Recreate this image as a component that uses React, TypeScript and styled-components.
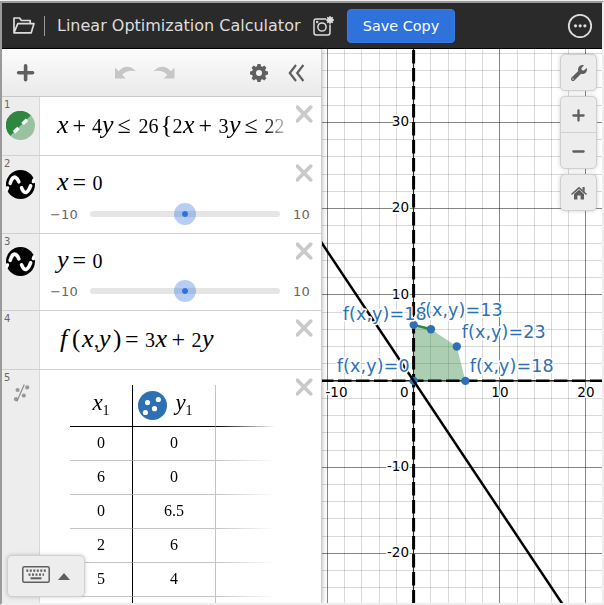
import React from "react";
import styled, { createGlobalStyle, css } from "styled-components";

const GlobalStyle = createGlobalStyle`
  * { box-sizing: border-box; }
  body { margin: 0; background: #eee; font-family: "DejaVu Sans", sans-serif; overflow: hidden; }
`;

const Frame = styled.div`
  width: 604px;
  height: 604px;
  margin-top: 1px;
  border: 2px solid;
  border-color: #9a9a9a #eee #eee #9a9a9a;
  display: flex;
  flex-direction: column;
  overflow: hidden;
  background: #fff;
`;

const Header = styled.header`
  height: 46px;
  flex: none;
  background: #2a2a2a;
  border-bottom: 1px solid #000;
  display: flex;
  align-items: center;
  padding: 0 10px 0 11px;
  color: #ddd;
`;

const Divider = styled.div`
  width: 1px;
  height: 20px;
  margin: 0 12px 0 9px;
  background: #999;
`;

const Title = styled.div`
  width: 256px;
  font-size: 16px;
  line-height: 20px;
  white-space: nowrap;
`;

const SaveButton = styled.button`
  width: 108px;
  height: 34px;
  margin: 0 auto 0 12px;
  border: 1px solid #3a7be0;
  border-radius: 4px;
  background: #2f72dc;
  color: #fff;
  padding: 0;
  font: 14.4px/32px "DejaVu Sans", sans-serif;
`;

const Main = styled.main`
  flex: 1;
  min-height: 0;
  display: flex;
`;

const Sidebar = styled.aside`
  width: 320px;
  flex: none;
  position: relative;
  z-index: 1;
  display: flex;
  flex-direction: column;
  background: #fff;
  border-right: 1px solid #ccc;
  box-shadow: 0 0 5px rgba(0, 0, 0, 0.32);
`;

const Toolbar = styled.div`
  height: 48px;
  flex: none;
  display: flex;
  align-items: center;
  padding: 0 16px 0 14px;
  background: linear-gradient(#fcfcfc, #eaeaea);
  border-bottom: 1px solid #c8c8c8;
`;

const ToolIcon = styled.svg<{ $gap?: number; $dim?: boolean }>`
  display: block;
  flex: none;
  margin-left: ${(p) => p.$gap ?? 0}px;
  color: ${(p) => (p.$dim ? "#c6c6c6" : "#5f5f5f")};
`;

const Expression = styled.section<{ $height: number }>`
  height: ${(p) => p.$height}px;
  flex: none;
  display: grid;
  grid-template-columns: 38px 1fr 25px;
  border-bottom: 1px solid #d0d0d0;
  overflow: hidden;
`;

const Gutter = styled.div`
  background: #ededed;
  border-right: 1px solid #d8d8d8;
  padding: 1px 0 0 2px;
`;

const Index = styled.div<{ $tight?: boolean }>`
  height: ${(p) => (p.$tight ? 12 : 13)}px;
  font-size: 10px;
  line-height: 13px;
  color: #666;
`;

const Badge = styled.svg`
  display: block;
  margin-left: 2px;
`;

const Body = styled.div`
  min-width: 0;
`;

const fade = css`
  mask-image: linear-gradient(90deg, #000 226px, transparent 250px);
`;

const MathLine = styled.div<{ $height: number; $line: number; $indent?: number; $fade?: boolean }>`
  display: flex;
  align-items: baseline;
  height: ${(p) => p.$height}px;
  line-height: ${(p) => p.$line}px;
  padding-left: ${(p) => p.$indent ?? 17}px;
  color: #000;
  font-family: "Liberation Serif", serif;
  font-size: 20px;
  overflow: hidden;
  ${(p) => p.$fade && fade}
`;

const Token = styled.span<{ $w: number; $kind: string }>`
  flex: none;
  width: ${(p) => p.$w}px;
  white-space: nowrap;
  ${(p) => p.$kind === "v" && css`font-style: italic; font-size: 26px;`}
  ${(p) => p.$kind === "o" && css`font-size: 24px;`}
  ${(p) => p.$kind === "b" && css`font-size: 25px;`}
`;

const SliderRow = styled.div`
  display: flex;
  align-items: center;
  height: 22px;
  color: #666;
  font-size: 13px;
  letter-spacing: 0.2px;
`;

const Bound = styled.span<{ $w: number; $pad: number }>`
  width: ${(p) => p.$w}px;
  flex: none;
  padding-left: ${(p) => p.$pad}px;
`;

const Track = styled.div`
  width: 190px;
  height: 6px;
  flex: none;
  border-radius: 3px;
  background: #e5e5e5;
  display: flex;
  align-items: center;
  justify-content: center;
`;

const Thumb = styled.div`
  width: 22px;
  height: 22px;
  flex: none;
  border-radius: 50%;
  border: 8px solid rgba(47, 114, 220, 0.35);
  background: #2f72dc;
  background-clip: padding-box;
`;

const CloseIcon = styled.svg`
  display: block;
  margin-top: 8px;
`;

const Table = styled.div`
  width: 205px;
  margin: 15px 0 0 30px;
  display: grid;
  grid-template-columns: 63px 83px 59px;
  grid-template-rows: 42px repeat(6, 34px);
  font-family: "Liberation Serif", serif;
  font-size: 16px;
  mask-image: linear-gradient(90deg, #000 147px, transparent 205px);
`;

const Cell = styled.div<{ $head?: boolean; $axis?: boolean; $last?: boolean }>`
  display: flex;
  align-items: center;
  justify-content: center;
  padding-bottom: ${(p) => (p.$head ? 0 : 2)}px;
  border-bottom: 1px solid ${(p) => (p.$head ? "#000" : "#c4c4c4")};
  border-right: ${(p) => (p.$last ? "none" : p.$axis ? "1px solid #000" : "1px solid #c4c4c4")};
`;

const HeadVar = styled.span`
  font-style: italic;
  font-size: 23px;
  line-height: 24px;
  margin-top: -6px;
  sub {
    font-style: normal;
    font-size: 14px;
    line-height: 0;
    vertical-align: -5px;
  }
`;

const DotBadge = styled.svg`
  flex: none;
  margin: 0 8px 0 -17px;
`;

const KeypadButton = styled.button`
  position: absolute;
  left: 5px;
  bottom: 6px;
  width: 78px;
  height: 42px;
  display: flex;
  align-items: center;
  gap: 8px;
  padding: 0 0 3px 14px;
  border: 1px solid #d0d0d0;
  border-radius: 5px;
  background: #ededed;
  box-shadow: 0 0 4px rgba(0, 0, 0, 0.2);
`;

const KeypadArrow = styled.svg`
  margin-top: 3px;
`;

const GraphPane = styled.div`
  flex: 1;
  min-width: 0;
  position: relative;
`;

const GraphSvg = styled.svg`
  display: block;
  font-family: "DejaVu Sans", sans-serif;
`;

const Controls = styled.div`
  position: absolute;
  top: 5px;
  right: 5px;
  display: flex;
  flex-direction: column;
  gap: 5px;
`;

const ControlGroup = styled.div`
  border: 1px solid #d0d0d0;
  border-radius: 5px;
  background: #ededed;
  box-shadow: 0 0 4px rgba(0, 0, 0, 0.18);
`;

const ControlButton = styled.button`
  width: 35px;
  height: 35px;
  display: flex;
  align-items: center;
  justify-content: center;
  padding: 1px 0 0;
  border: 0;
  background: none;
  & + & { border-top: 1px solid #d0d0d0; height: 36px; }
`;

type Tok = [string, number, ("v" | "n" | "o" | "b")?];

interface FormulaProps {
  tokens: Tok[];
  height: number;
  line?: number;
  indent?: number;
  faded?: boolean;
}

const Formula = ({ tokens, height, line, indent, faded }: FormulaProps) => (
  <MathLine $height={height} $line={line ?? height} $indent={indent} $fade={faded}>
    {tokens.map(([t, w, k], i) => (
      <Token key={i} $w={w} $kind={k ?? "n"}>{t}</Token>
    ))}
  </MathLine>
);

const Close = () => (
  <CloseIcon width="18" height="19" viewBox="0.8 0 18 19">
    <path d="M2.2 2.2 15.4 15.8M15.4 2.2 2.2 15.8" stroke="#cacaca" strokeWidth="3.8" strokeLinecap="round" />
  </CloseIcon>
);

const InequalityBadge = () => (
  <Badge width="29" height="29" viewBox="0 0 29 29">
    <circle cx="14.5" cy="14.5" r="14.5" fill="#9ac2a0" />
    <path d="M24.8 4.3A14.5 14.5 0 1 0 4.3 24.8Z" fill="#2f8640" />
    <path d="M8 21.2 12.5 17M16.5 13 21 8.8" stroke="#fff" strokeWidth="3.6" />
  </Badge>
);

const WaveBadge = () => (
  <Badge width="29" height="29" viewBox="0 0 29 29">
    <circle cx="14.5" cy="14.5" r="14.5" fill="#000" />
    <g fill="none" stroke="#fff" strokeWidth="3.6" strokeLinecap="round" strokeLinejoin="round">
      <path d="M4.2 13.3C5.5 8.3 7.8 6.5 9.5 7.3 11.2 8.2 12.2 10 12.8 11.8" />
      <path d="M15.6 17.8C17 21.5 18.7 23.3 20.5 22.2 22.4 21.2 23.6 18.5 24.6 15.8" />
      <path d="M27.5 11.5 28 10M.6 19.5 1.3 18" />
    </g>
  </Badge>
);

const TableBadge = () => (
  <Badge width="34" height="24" viewBox="4 12 34 24">
    <g fill="#999">
      <circle cx="15.6" cy="18" r="2.1" /><circle cx="25.2" cy="15.4" r="2.1" />
      <circle cx="14" cy="27.2" r="2.1" /><circle cx="21.8" cy="23.6" r="2.1" />
    </g>
    <path d="M14.8 29.5 22.3 12.5" stroke="#888" strokeWidth="1.1" />
  </Badge>
);

const X0 = 413.6;
const Y0 = 381.05;
const STEP_X = 17.235;
const STEP_Y = 17.24;
const px = (x: number) => 413.7 + x * 8.617;
const py = (y: number) => 380.9 - y * 8.617;

const range = (a: number, b: number) => Array.from({ length: b - a + 1 }, (_, i) => a + i);

const yTicks: [string, number][] = [["30", 126], ["20", 212], ["10", 298.5], ["-10", 471], ["-20", 557]];
const xTicks: [string, number][] = [["-10", 347.5], ["0", 408.5], ["10", 508.5], ["20", 594.5]];
const points = [[0, 0], [6, 0], [0, 6.5], [2, 6], [5, 4]];
const labels: [string, number, number, number][] = [
  ["f(x,y)=0", 336.7, 371.5, 73],
  ["f(x,y)=18", 469.7, 371.5, 84],
  ["f(x,y)=13", 418.7, 315.5, 84],
  ["f(x,y)=18", 342.7, 319.5, 84],
  ["f(x,y)=23", 461.7, 337.5, 84],
];

const Graph = () => (
  <GraphSvg width="280" height="554" viewBox="322 49 280 554">
    <rect x="322" y="49" width="280" height="554" fill="#fff" />
    {range(-5, 10).map((k) => (
      <rect key={k} x={Math.floor(X0 + k * STEP_X)} y="49" width="1" height="554" fill="#000" fillOpacity={k % 5 ? 0.15 : 0.48} />
    ))}
    {range(-19, 12).map((k) => (
      <rect key={k} x="322" y={Math.floor(Y0 + k * STEP_Y)} width="280" height="1" fill="#000" fillOpacity={k % 5 ? 0.15 : 0.48} />
    ))}
    <path d="M413.5 49V603M322 380.5H602" stroke="#222" strokeWidth="1.2" />
    <g fontSize="13.5" fill="#000" stroke="#fff" strokeWidth="3" strokeLinejoin="round" paintOrder="stroke" textAnchor="end">
      {yTicks.map(([t, y]) => <text key={t} x="409" y={y}>{t}</text>)}
      {xTicks.map(([t, x]) => <text key={t} x={x} y="397">{t}</text>)}
    </g>
    <path
      d={`M${px(0)} ${py(0)}L${px(0)} ${py(6.5)} ${px(2)} ${py(6)} ${px(5)} ${py(4)} ${px(6)} ${py(0)}Z`}
      fill="#2f8640" fillOpacity="0.4"
    />
    <path d={`M${px(0)} ${py(6.5)}L${px(2)} ${py(6)}`} stroke="#2f8640" strokeWidth="2.5" />
    <path d="M413.6 50V603" stroke="#000" strokeWidth="3" strokeDasharray="13.5 4.5" />
    <path d="M320 380.7H602" stroke="#000" strokeWidth="2.6" strokeDasharray="13.5 4.5" />
    <g fill="#2d70b3">
      {points.map(([x, y]) => <circle key={`${x},${y}`} cx={px(x)} cy={py(y)} r="4.2" />)}
    </g>
    <path d={`M${px(-12)} ${py(18)}L${px(20)} ${py(-30)}`} stroke="#000" strokeWidth="2.5" />
    <g fontSize="17.5" fill="#2d70b3" stroke="#fff" strokeWidth="3" strokeLinejoin="round" paintOrder="stroke">
      {labels.map(([t, x, y, w]) => <text key={`${x}`} x={x} y={y} textLength={w}>{t}</text>)}
    </g>
  </GraphSvg>
);

const rows = [["0", "0"], ["6", "0"], ["0", "6.5"], ["2", "6"], ["5", "4"], ["", ""]];

const ineq: Tok[] = [
  ["x", 15.5, "v"], ["+", 19.5, "o"], ["4", 10], ["y", 15.5, "v"], ["≤", 21, "o"], ["26", 22], ["{", 12, "b"],
  ["2", 10.5], ["x", 15.5, "v"], ["+", 20, "o"], ["3", 10.5], ["y", 15.5, "v"], ["≤", 20, "o"], ["22", 20],
];
const fn: Tok[] = [
  ["f", 12, "v"], ["(", 10, "b"], ["x", 12, "v"], [",", 5], ["y", 14, "v"], [")", 12, "b"], ["=", 20, "o"],
  ["3", 10.5], ["x", 16, "v"], ["+", 20, "o"], ["2", 10.5], ["y", 14, "v"],
];

const App = () => (
  <>
    <GlobalStyle />
    <Frame>
      <Header>
        <svg width="22" height="18" viewBox="0 0 22 18" fill="none" stroke="#ddd" strokeWidth="1.7" strokeLinejoin="round">
          <path d="M1 15.8V1h5.6l1.8 2.5h8.8v3M1 15.8 4.8 6.6H21l-2.8 9.2Z" />
        </svg>
        <Divider />
        <Title>Linear Optimization Calculator</Title>
        <svg width="22" height="22" viewBox="0 0 22 22" fill="none" stroke="#ddd" strokeWidth="1.5">
          <path d="M13 4H3.2Q1 4 1 6.2v11.6Q1 20 3.2 20h11.6q2.2 0 2.2-2.2V9.5" />
          <circle cx="9" cy="12" r="4.1" />
          <path d="M17 1v8M13 5h8M14.2 2.2l5.6 5.6M19.8 2.2l-5.6 5.6" strokeWidth="1.3" />
          <circle cx="17" cy="5" r="2.2" fill="#ddd" />
          <circle cx="4.2" cy="7" r=".5" />
        </svg>
        <SaveButton>Save Copy</SaveButton>
        <svg width="25" height="25" viewBox="0 0 25 25">
          <circle cx="13" cy="13" r="11.2" fill="none" stroke="#ddd" strokeWidth="1.8" />
          <g fill="#ddd"><circle cx="8.5" cy="12.8" r="1.6" /><circle cx="13.2" cy="12.8" r="1.6" /><circle cx="17.9" cy="12.8" r="1.6" /></g>
        </svg>
      </Header>
      <Main>
        <Sidebar>
          <Toolbar>
            <ToolIcon width="19" height="19" viewBox="0 0 19 19">
              <path d="M9.6 2.8v14M2.6 9.8h14" stroke="currentColor" strokeWidth="3.6" strokeLinecap="round" />
            </ToolIcon>
            <ToolIcon $gap={80} $dim width="22" height="14" viewBox="0 0 22 14">
              <path d="M0 1.5V12.5H10.8L7.2 9Q12 3.5 21 5.2 12-3.6 3.6 5.2Z" fill="currentColor" />
            </ToolIcon>
            <ToolIcon $gap={16} $dim width="22" height="14" viewBox="0.5 0 22 14">
              <path d="M22 1.5V12.5H11.2L14.8 9Q10 3.5 1 5.2 10-3.6 18.4 5.2Z" fill="currentColor" />
            </ToolIcon>
            <ToolIcon $gap={75} width="18" height="18" viewBox="-9 -9 18 18">
              <circle r="5" fill="none" stroke="currentColor" strokeWidth="4" />
              <g fill="currentColor">
                {range(0, 7).map((k) => (
                  <path key={k} d="M-2.2-6 -1.5-9H1.5L2.2-6Z" transform={`rotate(${k * 45})`} />
                ))}
              </g>
            </ToolIcon>
            <ToolIcon $gap={20} width="17" height="18" viewBox="0 0 17 18">
              <path d="M8 1 1.8 9 8 17M15.4 1 9.2 9 15.4 17" fill="none" stroke="currentColor" strokeWidth="2.2" />
            </ToolIcon>
          </Toolbar>

          <Expression $height={59}>
            <Gutter><Index>1</Index><InequalityBadge /></Gutter>
            <Body><Formula tokens={ineq} height={58} line={56} faded /></Body>
            <Close />
          </Expression>
          <Expression $height={78}>
            <Gutter><Index>2</Index><WaveBadge /></Gutter>
            <Body>
              <Formula tokens={[["x", 15.5, "v"], ["=", 20, "o"], ["0", 10]]} height={47} line={52} />
              <SliderRow><Bound $w={50} $pad={10}>−10</Bound><Track><Thumb /></Track><Bound $w={30} $pad={13}>10</Bound></SliderRow>
            </Body>
            <Close />
          </Expression>
          <Expression $height={77}>
            <Gutter><Index $tight>3</Index><WaveBadge /></Gutter>
            <Body>
              <Formula tokens={[["y", 15.5, "v"], ["=", 20, "o"], ["0", 10]]} height={46} line={52} />
              <SliderRow><Bound $w={50} $pad={10}>−10</Bound><Track><Thumb /></Track><Bound $w={30} $pad={13}>10</Bound></SliderRow>
            </Body>
            <Close />
          </Expression>
          <Expression $height={59}>
            <Gutter><Index>4</Index></Gutter>
            <Body><Formula tokens={fn} height={58} line={56} indent={20} /></Body>
            <Close />
          </Expression>
          <Expression $height={260}>
            <Gutter><Index>5</Index><TableBadge /></Gutter>
            <Body>
              <Table>
                <Cell $head $axis><HeadVar>x<sub>1</sub></HeadVar></Cell>
                <Cell $head>
                  <DotBadge width="29" height="29" viewBox="0 0 29 29">
                    <circle cx="14.5" cy="14.5" r="14.5" fill="#2d70b3" />
                    <g fill="#fff"><circle cx="9.5" cy="11.5" r="2.6" /><circle cx="20.3" cy="8.5" r="2.6" /><circle cx="16.5" cy="17.7" r="2.6" /><circle cx="7.4" cy="21.5" r="2.6" /></g>
                  </DotBadge>
                  <HeadVar>y<sub>1</sub></HeadVar>
                </Cell>
                <Cell $head $last />
                {rows.map(([a, b], i) => (
                  <React.Fragment key={i}>
                    <Cell $axis>{a}</Cell>
                    <Cell>{b}</Cell>
                    <Cell $last />
                  </React.Fragment>
                ))}
              </Table>
            </Body>
            <Close />
          </Expression>
          <KeypadButton>
            <svg width="28" height="17" viewBox="0 0 28 17">
              <rect x=".8" y=".8" width="26.4" height="15.4" rx="1.5" fill="none" stroke="#5f5f5f" strokeWidth="1.5" />
              <path d="M4.3 4.7H24M6.5 8.7H22" stroke="#5f5f5f" strokeWidth="2.2" strokeDasharray="2 1.5" />
              <path d="M8.5 12.3H19.5" stroke="#5f5f5f" strokeWidth="2" />
            </svg>
            <KeypadArrow width="12" height="7" viewBox="0 0 12 7"><path d="M0 7 6 0 12 7Z" fill="#5f5f5f" /></KeypadArrow>
          </KeypadButton>
        </Sidebar>
        <GraphPane>
          <Graph />
          <Controls>
            <ControlGroup>
              <ControlButton>
                <svg width="16" height="16" viewBox="0 0 512 512" fill="#5f5f5f">
                  <path d="M507.7 109.1c-2.2-9-13.5-12.1-20.1-5.5l-74.4 74.4-67.9-11.3L334 98.9l74.4-74.4c6.6-6.6 3.4-17.9-5.7-20.2-47.4-11.7-99.6.9-136.6 37.9-39.6 39.6-50.5 97.1-34.1 147.2L18.7 402.8c-25 25-25 65.5 0 90.5s65.5 25 90.5 0l213.2-213.2c50.1 16.7 107.5 5.7 147.4-34.2 37.1-37 49.7-89.3 37.9-136.8zM64 472c-13.2 0-24-10.8-24-24 0-13.3 10.7-24 24-24s24 10.7 24 24c0 13.2-10.7 24-24 24z" />
                </svg>
              </ControlButton>
            </ControlGroup>
            <ControlGroup>
              <ControlButton>
                <svg width="13" height="13" viewBox="0 0 13 13"><path d="M6.5 1.4v10.2M1.4 6.5h10.2" stroke="#5f5f5f" strokeWidth="2.3" strokeLinecap="round" /></svg>
              </ControlButton>
              <ControlButton>
                <svg width="13" height="13" viewBox="0 0 13 13"><path d="M1.4 6.5h10.2" stroke="#5f5f5f" strokeWidth="2.3" strokeLinecap="round" /></svg>
              </ControlButton>
            </ControlGroup>
            <ControlGroup>
              <ControlButton>
                <svg width="16" height="14" viewBox="0 0 16 14">
                  <path d="M1 8 8 1.8 15 8" fill="none" stroke="#5f5f5f" strokeWidth="1.6" strokeLinecap="round" />
                  <path d="M11.5 1H13.7V6L11.5 4ZM3 8 8 3.7 13 8V13.5H9.6V9.5H6.4V13.5H3Z" fill="#5f5f5f" />
                </svg>
              </ControlButton>
            </ControlGroup>
          </Controls>
        </GraphPane>
      </Main>
    </Frame>
  </>
);

export default App;
